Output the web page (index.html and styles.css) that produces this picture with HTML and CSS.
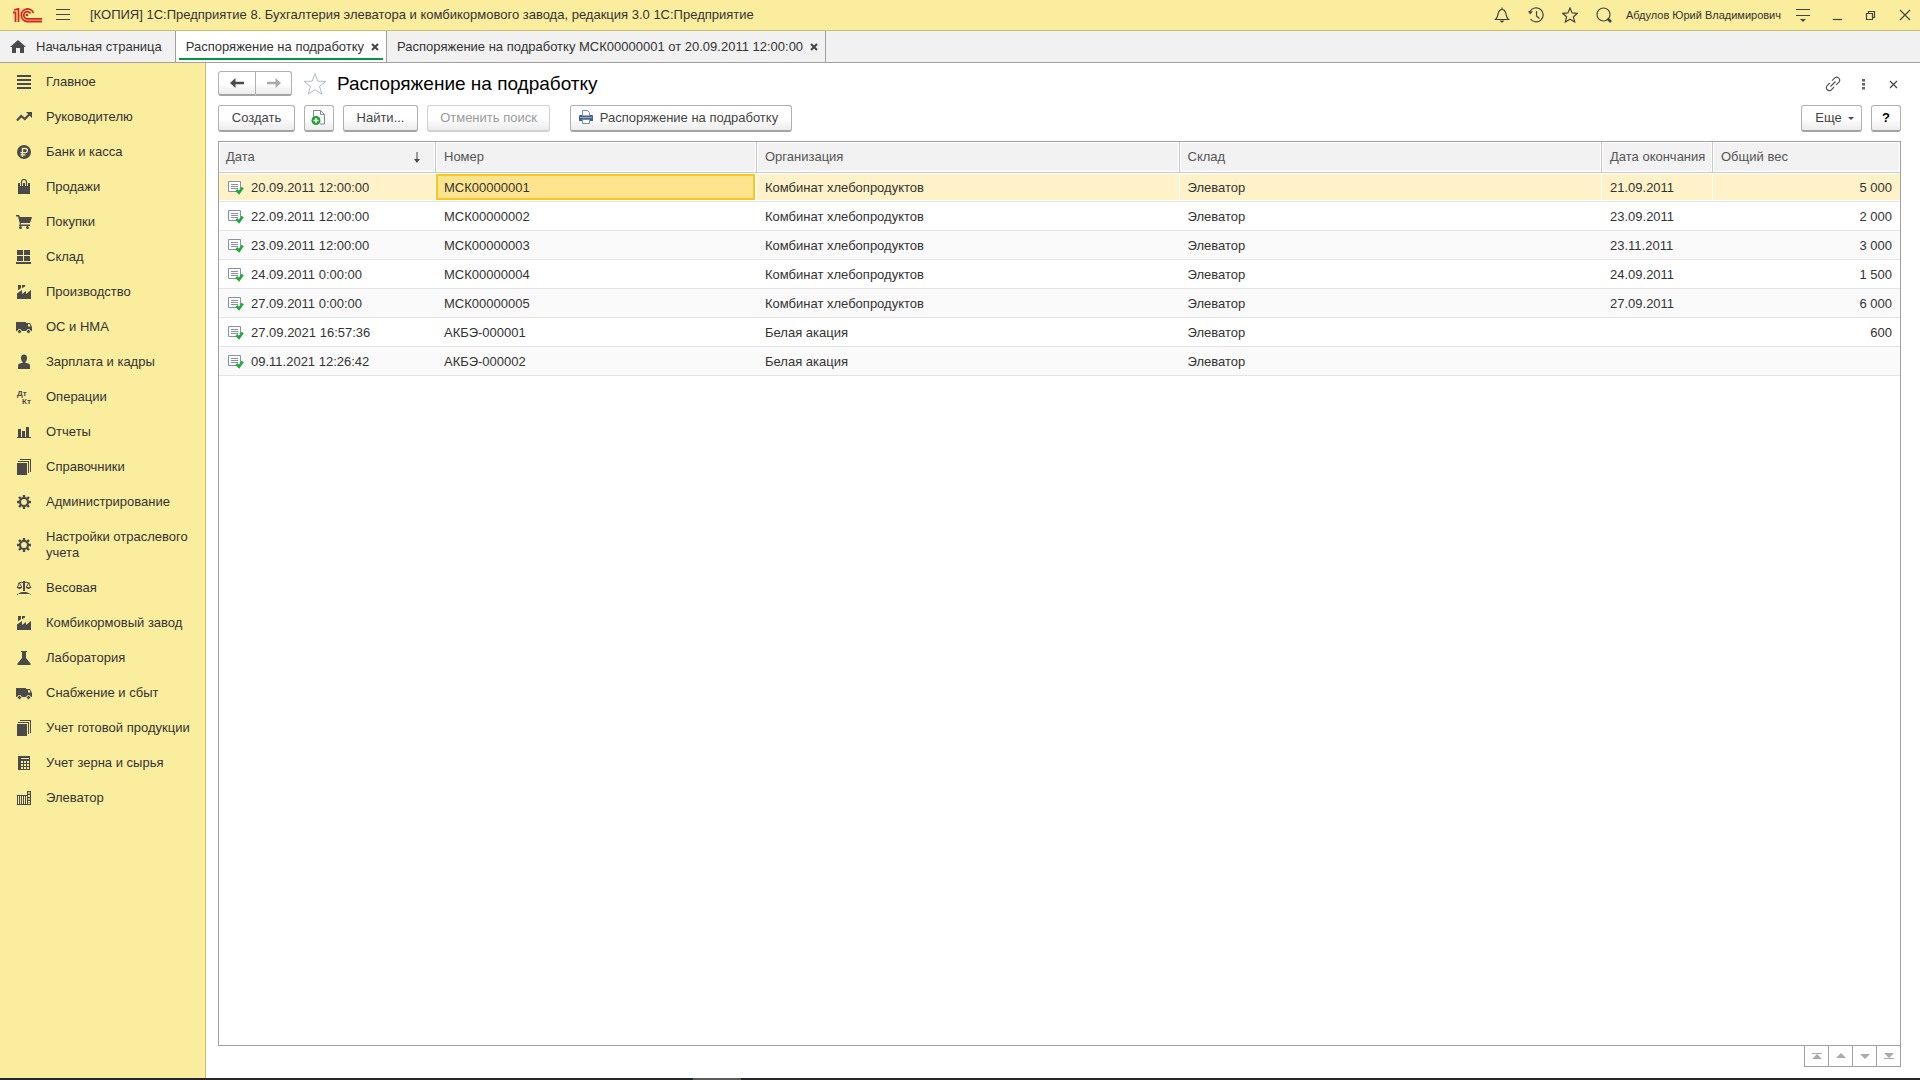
FILE: index.html
```html
<!DOCTYPE html>
<html lang="ru">
<head>
<meta charset="utf-8">
<title>Распоряжение на подработку</title>
<link rel="stylesheet" href="styles.css">
</head>
<body>
<svg class="sprite" aria-hidden="true">
  <symbol id="i-list" viewBox="0 0 16 16"><path d="M1 1h14v2H1zM1 5h14v2H1zM1 9h14v2H1zM1 13h14v2H1z"/></symbol>
  <symbol id="i-trend" viewBox="0 0 16 16"><path d="M1 11.5 5.2 7l3.6 3L14 4.800" fill="none" stroke="currentColor" stroke-width="2.200"/><path d="M10 3h6v6z"/></symbol>
  <symbol id="i-ruble" viewBox="0 0 16 16"><circle cx="8" cy="8" r="7"/><path d="M6.500 13V4.500h2.800a2 2 0 0 1 0 4.200H4.500M4.500 10.800h5" fill="none" stroke="#fbed9e" stroke-width="1.300"/></symbol>
  <symbol id="i-bag" viewBox="0 0 16 16"><path d="M2 4h12v11H2z"/><path d="M5.500 7V3a2.500 2.500 0 0 1 5 0v4" fill="none" stroke="#fbed9e" stroke-width="3"/><path d="M5.500 7V3a2.500 2.500 0 0 1 5 0v4" fill="none" stroke="currentColor" stroke-width="1.200"/></symbol>
  <symbol id="i-cart" viewBox="0 0 16 16"><path d="M0 1h3l1 2h12l-2 6H5l-.5 1.500H14V12H3l.8-2.500L2 2.500H0z"/><circle cx="4.500" cy="13.500" r="1.500"/><circle cx="11.500" cy="13.500" r="1.500"/></symbol>
  <symbol id="i-store" viewBox="0 0 16 16"><path d="M1 1h6v5H1zM8 1h6v5H8zM1 7h6v5H1zM8 7h6v5H8zM0 13h15v2H0z"/></symbol>
  <symbol id="i-factory" viewBox="0 0 16 16"><path d="M1 15V9.500l5-3.500v4l4-3v3l5-4v9zM2 1h3v3.200L2 6.300zM6 1h3v1.500L6 4.300z"/></symbol>
  <symbol id="i-truck" viewBox="0 0 16 16"><path d="M0 3h10v9H0zM10 4h4l2 4v4h-6z"/><path d="M12 5h1.500l1 2.500H12z" fill="#fbed9e"/><g stroke="#fbed9e"><circle cx="3.500" cy="12.500" r="2"/><circle cx="12.500" cy="12.500" r="2"/></g></symbol>
  <symbol id="i-person" viewBox="0 0 16 16"><ellipse cx="8" cy="4.200" rx="3" ry="3.600"/><path d="M6.500 7h3v1.800l3.500 1q1 .5 1 2V15H2v-3.200q0-1.500 1-2l3.500-1z"/></symbol>
  <symbol id="i-dtkt" viewBox="0 0 16 16"><text x="1" y="7" class="tiny">Дт</text><text x="6" y="15" class="tiny">Кт</text></symbol>
  <symbol id="i-chart" viewBox="0 0 16 16"><path d="M2 5h3v8H2zM6 7h3v6H6zM10 3h3v10h-3zM1 13h14v1H1z"/></symbol>
  <symbol id="i-books" viewBox="0 0 16 16"><path d="M1 4h10v12H1zM2 2h11v12h-1V3H2zM4 0h11v13h-1V1H4z"/></symbol>
  <symbol id="i-gear" viewBox="0 0 16 16"><circle cx="8" cy="8" r="4" fill="none" stroke="currentColor" stroke-width="2.200"/><path d="M8 1v3M8 12v3M1 8h3M12 8h3M3 3l2.200 2.200M10.800 10.800 13 13M3 13l2.200-2.200M10.800 5.200 13 3" stroke="currentColor" stroke-width="2.400"/></symbol>
  <symbol id="i-scales" viewBox="0 0 16 16"><path d="M7 1h2v10H7zM2 15q0-2 4-3h4q4 1 5 3zM1 15h14v-1H1z"/><path d="M2 3.500q3-2 6-1 3-1 6 1M3.500 3 1.200 7.500h4.600zM12.500 3l-2.300 4.500h4.600z" fill="none" stroke="currentColor"/><path d="M1 7h5q-.5 2-2.500 2T1 7zM10 7h5q-.5 2-2.500 2T10 7z"/></symbol>
  <symbol id="i-flask" viewBox="0 0 16 16"><path d="M5 1h6v1h-1v6l4.500 5.500V15H1.500v-1.500L6 8V2H5z"/></symbol>
  <symbol id="i-calc" viewBox="0 0 16 16"><path d="M2 1h12v14H2z"/><path d="M5 3h8v1H5zM5 6h2v2H5zM8 6h2v2H8zM11 6h2v2h-2zM5 9h2v2H5zM8 9h2v2H8zM11 9h2v2h-2zM5 12h2v2H5zM8 12h2v2H8zM11 12h2v2h-2z" fill="#fbed9e"/></symbol>
  <symbol id="i-silo" viewBox="0 0 16 16"><path d="M1.500 5v9M3.500 5v9M5.500 5v9M7.500 5v9M9.500 5v9M11.500 1v13M14.500 1v13M1 5.500h10M11 1.500h4M1 14.500h14M12 4.500h2M12 7.500h2M12 10.500h2M12.500 3h1M12.500 9h1M12.500 12.500h1" fill="none" stroke="currentColor"/></symbol>
  <symbol id="i-doc" viewBox="0 0 16 14"><path d="M.5.500h12v10H.5z" fill="#fff" stroke="#8592a6"/><path d="M3 3.500h7M3 5.500h7M3 7.500h7" stroke="#8592a6"/><path d="m8.300 9 2.700 2.700L14.700 6.500" fill="none" stroke="#25a83c" stroke-width="2.800"/></symbol>
</svg>

<header class="titlebar">
  <svg class="logo" viewBox="0 0 30 15" aria-label="1С"><g fill="none" stroke="#d9251c" stroke-width="1.800"><path d="M0 4.500h2.500V14M1 2 5.500.800V14"/><path d="M20.500 5A6.300 6.300 0 1 0 14 13.500h15"/><path d="M17.500 5.500A3.600 3.600 0 1 0 14 10.800h15"/></g><circle cx="14" cy="7" r="1.300" fill="#d9251c"/></svg>
  <button class="bare" aria-label="Меню"><svg class="burger" viewBox="0 0 14 12"><path d="M0 .5h14M0 5.500h14M0 10.500h14" stroke="#444"/></svg></button>
  <span class="app-title">[КОПИЯ] 1С:Предприятие 8. Бухгалтерия элеватора и комбикормового завода, редакция 3.0 1С:Предприятие</span>
  <div class="sys">
    <button class="bare" aria-label="Уведомления"><svg viewBox="0 0 16 16"><path d="M1.500 12.500h13C12 10 12.500 8 11.500 5.500 11 3.500 9.500 2.500 8 2.500S5 3.500 4.500 5.500C3.500 8 4 10 1.500 12.500zM8 .5v2" class="ln"/><path d="M5.500 13.500h5L8 16z"/></svg></button>
    <button class="bare" aria-label="История"><svg viewBox="0 0 16 16"><path d="M2 4.500A7 7 0 1 1 2.500 12M8.500 4v5l3 2.500" class="ln"/><path d="m0 4 5 .5L2 7.500z"/></svg></button>
    <button class="bare" aria-label="Избранное"><svg viewBox="0 0 16 16"><path d="m8 1 2.100 4.900 5.400.4-4.100 3.500 1.300 5.200L8 12.200 3.300 15l1.300-5.200L.5 6.300l5.400-.4z" class="ln"/></svg></button>
    <button class="bare" aria-label="Поиск"><svg viewBox="0 0 16 16"><circle cx="7.500" cy="7.500" r="6.500" class="ln"/><path d="m11.500 11.500 3.500 3.500" stroke="#444" stroke-width="2.500"/></svg></button>
    <a class="user" href="#">Абдулов Юрий Владимирович</a>
    <button class="bare" aria-label="Настройки"><svg viewBox="0 0 16 16"><path d="M1 2.500h14M1 8.500h14" class="ln"/><path d="M5 12h6l-3 3z"/></svg></button>
    <button class="bare win" aria-label="Свернуть"><svg viewBox="0 0 16 16"><path d="M4 12.500h9" class="ln"/></svg></button>
    <button class="bare win" aria-label="Восстановить"><svg viewBox="0 0 16 16"><path d="M3.500 6.500h6v6h-6zM5.500 6V4.500h6v6H10" class="ln"/></svg></button>
    <button class="bare win" aria-label="Закрыть"><svg viewBox="0 0 16 16"><path d="m3 3 10 10M13 3 3 13" class="ln"/></svg></button>
  </div>
</header>

<nav class="tabs" aria-label="Открытые окна">
  <a class="tab home" href="#"><svg viewBox="0 0 16 14"><path d="M8 0 0 7h2v6h4V8h4v5h4V7h2z"/></svg>Начальная страница</a>
  <div class="tab active"><a href="#">Распоряжение на подработку</a><button class="bare" aria-label="Закрыть вкладку"><svg viewBox="0 0 8 8"><path d="m1 1 6 6M7 1 1 7"/></svg></button></div>
  <div class="tab"><a href="#">Распоряжение на подработку МСК00000001 от 20.09.2011 12:00:00</a><button class="bare" aria-label="Закрыть вкладку"><svg viewBox="0 0 8 8"><path d="m1 1 6 6M7 1 1 7"/></svg></button></div>
</nav>

<div class="body">
  <nav class="side" aria-label="Разделы">
    <a href="#"><svg><use href="#i-list"/></svg>Главное</a>
    <a href="#"><svg><use href="#i-trend"/></svg>Руководителю</a>
    <a href="#"><svg><use href="#i-ruble"/></svg>Банк и касса</a>
    <a href="#"><svg><use href="#i-bag"/></svg>Продажи</a>
    <a href="#"><svg><use href="#i-cart"/></svg>Покупки</a>
    <a href="#"><svg><use href="#i-store"/></svg>Склад</a>
    <a href="#"><svg><use href="#i-factory"/></svg>Производство</a>
    <a href="#"><svg><use href="#i-truck"/></svg>ОС и НМА</a>
    <a href="#"><svg><use href="#i-person"/></svg>Зарплата и кадры</a>
    <a href="#"><svg><use href="#i-dtkt"/></svg>Операции</a>
    <a href="#"><svg><use href="#i-chart"/></svg>Отчеты</a>
    <a href="#"><svg><use href="#i-books"/></svg>Справочники</a>
    <a href="#"><svg><use href="#i-gear"/></svg>Администрирование</a>
    <a href="#"><svg><use href="#i-gear"/></svg>Настройки отраслевого учета</a>
    <a href="#"><svg><use href="#i-scales"/></svg>Весовая</a>
    <a href="#"><svg><use href="#i-factory"/></svg>Комбикормовый завод</a>
    <a href="#"><svg><use href="#i-flask"/></svg>Лаборатория</a>
    <a href="#"><svg><use href="#i-truck"/></svg>Снабжение и сбыт</a>
    <a href="#"><svg><use href="#i-books"/></svg>Учет готовой продукции</a>
    <a href="#"><svg><use href="#i-calc"/></svg>Учет зерна и сырья</a>
    <a href="#"><svg><use href="#i-silo"/></svg>Элеватор</a>
  </nav>

  <main class="page">
    <div class="head">
      <div class="history">
        <button class="btn" aria-label="Назад"><svg viewBox="0 0 14 10"><path d="M5.500 0v3.800H14v2.400H5.500V10L0 5z"/></svg></button>
        <button class="btn off" aria-label="Вперед" disabled><svg viewBox="0 0 14 10"><path d="M8.500 0v3.800H0v2.400h8.500V10L14 5z"/></svg></button>
      </div>
      <button class="bare fav" aria-label="В избранное"><svg viewBox="0 0 24 24"><path d="m12 1.500 2.800 7.700 8.200.2-6.500 5 2.300 7.800L12 17.600l-6.800 4.600 2.300-7.800-6.500-5 8.200-.2z"/></svg></button>
      <h1>Распоряжение на подработку</h1>
      <div class="page-tools">
        <button class="bare" aria-label="Получить ссылку"><svg viewBox="0 0 16 16"><path d="m7 4.700 2.800-2.800a3 3 0 0 1 4.200 4.200l-2.800 2.800M9 11.200 6.200 14A3 3 0 0 1 2 9.800L4.800 7M5.500 10.500l5-5" fill="none" stroke="#555" stroke-width="1.200"/></svg></button>
        <button class="bare" aria-label="Действия"><svg viewBox="0 0 16 16"><path d="M7 3h3v2.500H7zM7 7h3v2.500H7zM7 11h3v2.500H7z" fill="#666"/></svg></button>
        <button class="bare" aria-label="Закрыть"><svg viewBox="0 0 16 16"><path d="m5 5 7 7M12 5l-7 7" class="ln"/></svg></button>
      </div>
    </div>

    <div class="commands">
      <button class="btn create">Создать</button>
      <button class="btn square" aria-label="Создать копированием"><svg viewBox="0 0 16 16"><path d="M2.500 8V.5h7l4 4V14H9M9.500.5v4h4" fill="none" stroke="#7b8ba1"/><circle cx="5" cy="10.500" r="4.500" fill="#249c35"/><path d="M5 8v5M2.500 10.500h5" stroke="#fff" stroke-width="1.400"/></svg></button>
      <button class="btn find">Найти...</button>
      <button class="btn cancel" disabled>Отменить поиск</button>
      <button class="btn print"><svg viewBox="0 0 16 16"><path d="M2 5h12q1 0 1 1v5H1V6q0-1 1-1z" fill="#3f658e"/><path d="M4.500 5.500v-5h5l2 2v3" fill="#fff" stroke="#7b8ba1"/><path d="M2 7.500h12" stroke="#9ab0c8"/><path d="M4.500 9.500h7v4h-7z" fill="#fff" stroke="#7b8ba1"/></svg>Распоряжение на подработку</button>
      <button class="btn more">Еще<svg viewBox="0 0 6 3"><path d="M0 0h6L3 3z"/></svg></button>
      <button class="btn square help">?</button>
    </div>

    <div class="grid">
      <table>
        <colgroup><col class="c-date"><col class="c-num"><col><col><col class="c-end"><col class="c-weight"></colgroup>
        <thead>
          <tr><th><div class="sort">Дата<svg viewBox="0 0 6 11"><path d="M3 0v9" stroke="#444" stroke-width="1"/><path d="M0 7h6l-3 4z"/></svg></div></th><th>Номер</th><th>Организация</th><th>Склад</th><th>Дата окончания</th><th>Общий вес</th></tr>
        </thead>
        <tbody>
          <tr class="selected"><td><svg><use href="#i-doc"/></svg>20.09.2011 12:00:00</td><td class="current">МСК00000001</td><td>Комбинат хлебопродуктов</td><td>Элеватор</td><td>21.09.2011</td><td>5 000</td></tr>
          <tr><td><svg><use href="#i-doc"/></svg>22.09.2011 12:00:00</td><td>МСК00000002</td><td>Комбинат хлебопродуктов</td><td>Элеватор</td><td>23.09.2011</td><td>2 000</td></tr>
          <tr><td><svg><use href="#i-doc"/></svg>23.09.2011 12:00:00</td><td>МСК00000003</td><td>Комбинат хлебопродуктов</td><td>Элеватор</td><td>23.11.2011</td><td>3 000</td></tr>
          <tr><td><svg><use href="#i-doc"/></svg>24.09.2011 0:00:00</td><td>МСК00000004</td><td>Комбинат хлебопродуктов</td><td>Элеватор</td><td>24.09.2011</td><td>1 500</td></tr>
          <tr><td><svg><use href="#i-doc"/></svg>27.09.2011 0:00:00</td><td>МСК00000005</td><td>Комбинат хлебопродуктов</td><td>Элеватор</td><td>27.09.2011</td><td>6 000</td></tr>
          <tr><td><svg><use href="#i-doc"/></svg>27.09.2021 16:57:36</td><td>АКБЭ-000001</td><td>Белая акация</td><td>Элеватор</td><td></td><td>600</td></tr>
          <tr><td><svg><use href="#i-doc"/></svg>09.11.2021 12:26:42</td><td>АКБЭ-000002</td><td>Белая акация</td><td>Элеватор</td><td></td><td></td></tr>
        </tbody>
      </table>
    </div>
    <div class="pager">
      <button aria-label="В начало"><svg viewBox="0 0 10 6"><path d="M0 0h10v1H0zM5 1l5 5H0z"/></svg></button>
      <button aria-label="Вверх"><svg viewBox="0 0 10 6"><path d="m5 0 5 5H0z"/></svg></button>
      <button aria-label="Вниз"><svg viewBox="0 0 10 6"><path d="m5 6 5-5H0z"/></svg></button>
      <button aria-label="В конец"><svg viewBox="0 0 10 6"><path d="M0 5h10v1H0zM5 5l5-5H0z"/></svg></button>
    </div>
  </main>
</div>
<div class="edge"></div>
</body>
</html>
```
FILE: styles.css
```css
* { box-sizing: border-box; }

body {
  margin: 0;
  min-height: 100vh;
  display: flex;
  flex-direction: column;
  background: #fff;
  color: #333;
  font: 13px/16px "Liberation Sans", Arial, sans-serif;
}

a { color: inherit; text-decoration: none; }
button { font: inherit; color: inherit; }
svg { display: block; flex: none; width: 16px; height: 16px; fill: #4a4a4a; color: #4a4a4a; }
.sprite { display: none; }
.ln { fill: none; stroke: #444; stroke-width: 1.2; }
.tiny { font: bold 8px "Liberation Sans", Arial, sans-serif; }
.bare { padding: 0; border: 0; background: none; }

/* Title bar */
.titlebar {
  display: flex;
  align-items: center;
  height: 31px;
  padding: 0 7px 0 13px;
  background: #fbed9e;
  border-bottom: 1px solid #c9bd71;
}
.logo { width: 30px; height: 15px; margin-right: 13px; }
.burger { width: 14px; height: 12px; }
.app-title { margin-left: 20px; }
.sys { display: flex; align-items: center; gap: 18px; margin-left: auto; }
.user { margin: 0 -4px; font-size: 11px; }

/* Window tabs */
.tabs {
  display: flex;
  height: 32px;
  background: #f1f1f1;
  border-bottom: 1px solid #a0a0a0;
}
.tab {
  display: flex;
  align-items: center;
  gap: 7px;
  padding: 0 7px 0 10px;
  border-right: 1px solid #a0a0a0;
}
.tab svg { width: 8px; height: 8px; stroke: #444; stroke-width: 2; }
.home { padding: 0 13px 0 10px; gap: 10px; }
.home svg { width: 16px; height: 14px; stroke: none; }
.active {
  background: linear-gradient(#009646, #009646) center bottom 2px / calc(100% - 6px) 2px no-repeat #fff;
}

/* Sections panel */
.body { display: flex; flex: 1; }
.side {
  flex: none;
  width: 206px;
  padding-top: 1px;
  background: #fbed9e;
  border-right: 1px solid #c9bd71;
}
.side a {
  display: flex;
  align-items: center;
  gap: 14px;
  min-height: 35px;
  padding: 10px 14px 9px 16px;
}

/* Page */
.page {
  flex: 1;
  min-width: 0;
  display: flex;
  flex-direction: column;
  padding: 8px 19px 11px 12px;
}
.head { display: flex; align-items: center; height: 25px; }
.history { display: flex; }
.fav { margin: 0 10px 0 11px; }
.fav svg { width: 24px; height: 24px; fill: none; stroke: #b4bac4; }
h1 { margin: 0; color: #000; font-size: 19px; line-height: 22px; font-weight: 400; }
.page-tools { display: flex; gap: 14px; margin-left: auto; }

.btn {
  display: flex;
  align-items: center;
  justify-content: center;
  height: 27px;
  padding: 0;
  border: 1px solid #b0b0b0;
  border-bottom: 2px solid #a3a3a3;
  border-radius: 3px;
  background: linear-gradient(#fff 50%, #ececec);
  color: #444;
}
.btn:disabled { color: #999; border-color: #d0d0d0; }
.history .btn { width: 38px; height: 25px; border-radius: 3px 0 0 3px; }
.history .off { width: 36px; border-color: #b0b0b0 #b0b0b0 #a3a3a3; border-left: 0; border-radius: 0 3px 3px 0; }
.history svg { width: 14px; height: 10px; }
.history .off svg { fill: #aaa; }

.commands { display: flex; gap: 9px; margin: 9px 0; }
.create { width: 77px; }
.square { width: 30px; }
.find { width: 75px; }
.cancel { width: 123px; }
.print { width: 222px; margin-left: 11px; gap: 6px; padding-right: 6px; }
.more { width: 61px; margin-left: auto; gap: 6px; padding-left: 6px; }
.more svg { width: 6px; height: 3px; }
.help { color: #000; font-weight: 700; }

/* Document list */
.grid { flex: 1; border: 1px solid #a0a0a0; }
table { width: 100%; table-layout: fixed; border-collapse: separate; border-spacing: 0; }
.c-date { width: 216px; }
.c-num { width: 321px; }
.c-end { width: 111px; }
.c-weight { width: 188px; }
th {
  height: 31px;
  padding: 0 0 0 8px;
  background: #f2f2f2;
  border-bottom: 1px solid #c8c8c8;
  border-left: 1px solid #c8c8c8;
  box-shadow: inset 0 0 0 1px #fff;
  color: #555;
  font-weight: 400;
  text-align: left;
  white-space: nowrap;
}
th:first-child { border-left: 0; padding-left: 7px; }
.sort { display: flex; align-items: center; justify-content: space-between; padding-right: 15px; }
.sort svg { width: 6px; height: 11px; }
td {
  height: 29px;
  padding: 2px 8px 0 9px;
  border-bottom: 1px solid #e4e4e4;
  white-space: nowrap;
}
td svg { display: inline-block; height: 14px; margin-right: 7px; vertical-align: -3px; }
td:last-child { text-align: right; }
tr:nth-child(odd) td { background: #fafafa; }
.selected td:nth-child(n) {
  background: #fff2c8;
  box-shadow: inset 1px 0 #fff, inset 0 1px #fff, inset 0 -1px #fff;
}
.selected td:first-child { box-shadow: inset 0 1px #fff, inset 0 -1px #fff; }
.selected td.current:nth-child(n) {
  background: #ffe48f;
  box-shadow: inset 0 0 0 1px #fff, inset 0 0 0 3px #fcc61c;
}

.pager { display: flex; align-self: flex-end; }
.pager button {
  display: grid;
  place-items: center;
  width: 24px;
  height: 21px;
  padding: 0;
  border: 1px solid #a0a0a0;
  border-width: 0 0 1px 1px;
  background: #fff;
}
.pager button:last-child { width: 25px; border-right-width: 1px; }
.pager svg { width: 10px; height: 6px; fill: #aaa; }

/* Dark strip along the bottom edge */
.edge {
  height: 2px;
  background: linear-gradient(#5a5a5a, #5a5a5a) 37% 0 / 48px 2px no-repeat #25262b;
}
```
